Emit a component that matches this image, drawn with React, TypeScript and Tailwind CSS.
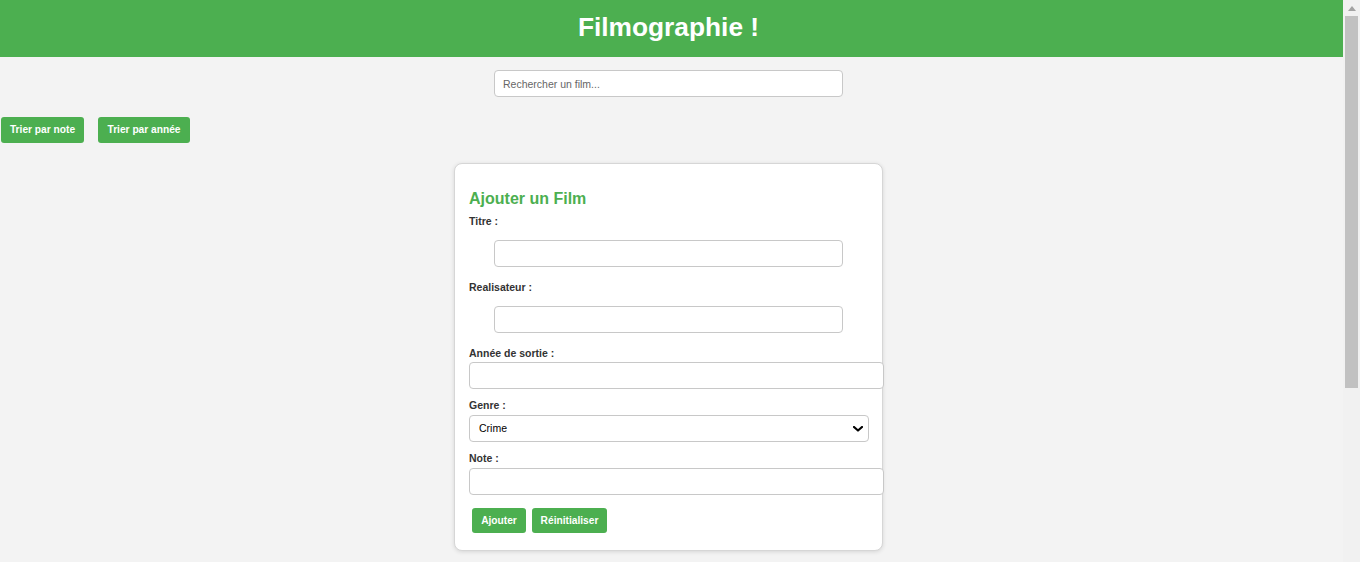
import React from 'react';

const font = { fontFamily: '"Liberation Sans", Arial, sans-serif' };

function Label({ children, className = '' }: { children: React.ReactNode; className?: string }) {
    return <label className={`block text-[10.5px] leading-[13px] font-bold text-[#333] ${className}`}>{children}</label>;
}

function Field({ className = '' }: { className?: string }) {
    return <input type="text" className={`block h-[27px] bg-white border border-[#c8c8c8] rounded-[4px] px-2 text-[10.5px] outline-none ${className}`} />;
}

function GreenButton({ children, className = '' }: { children: React.ReactNode; className?: string }) {
    return (
        <button className={`bg-[#4CAF50] text-white text-[10.2px] font-bold rounded-[3px] whitespace-nowrap ${className}`}>
            {children}
        </button>
    );
}

export default function App() {
    return (
        <div style={font} className="flex h-[562px] w-[1360px] overflow-hidden bg-[#f3f3f3]">
            <div className="w-[1343px] flex flex-col">
                {/* header */}
                <header className="h-[57px] shrink-0 bg-[#4CAF50] flex items-center justify-center pr-[6px]">
                    <h1 className="text-white text-[26.3px] font-bold leading-none pb-[2px]">Filmographie !</h1>
                </header>

                <div className="pr-[6px]">
                    <input
                        type="text"
                        placeholder="Rechercher un film..."
                        className="block mx-auto mt-[13px] w-[349px] h-[27px] bg-white border border-[#c8c8c8] rounded-[4px] px-2 text-[10.5px] placeholder:text-[#666] outline-none"
                    />
                </div>

                <div className="flex gap-[14px] mt-[20px] ml-[1px]">
                    <GreenButton className="h-[26px] w-[83px]">Trier par note</GreenButton>
                    <GreenButton className="h-[26px] w-[92px]">Trier par année</GreenButton>
                </div>

                <div className="pr-[6px]">
                    <div className="mx-auto mt-[20px] w-[429px] bg-white border border-[#d6d6d6] rounded-[8px] shadow-[0_1px_4px_rgba(0,0,0,0.12)] pt-[26px] px-[14px] pb-[17px]">
                        <h2 className="text-[#4CAF50] text-[16px] leading-[18px] font-bold">Ajouter un Film</h2>

                        <Label className="mt-[7px]">Titre :</Label>
                        <Field className="mt-[12px] w-[349px] mx-auto" />

                        <Label className="mt-[14px]">Realisateur :</Label>
                        <Field className="mt-[12px] w-[349px] mx-auto" />

                        <Label className="mt-[14px]">Année de sortie :</Label>
                        <Field className="mt-[2px] w-[415px]" />

                        <Label className="mt-[10px]">Genre :</Label>
                        <div className="relative mt-[3px] w-[400px]">
                            <select className="appearance-none block w-full h-[27px] bg-white border border-[#c8c8c8] rounded-[4px] pl-[9px] text-[10.5px] text-black outline-none">
                                <option>Crime</option>
                            </select>
                            <svg className="absolute right-[6px] top-[11px] pointer-events-none" width="10" height="6" viewBox="0 0 10 6">
                                <polyline points="1,1 5,4.5 9,1" fill="none" stroke="#000" strokeWidth="2.2" strokeLinecap="round" strokeLinejoin="round" />
                            </svg>
                        </div>

                        <Label className="mt-[10px]">Note :</Label>
                        <Field className="mt-[3px] w-[415px]" />

                        <div className="flex gap-[6px] mt-[13px] ml-[3px]">
                            <GreenButton className="h-[25px] w-[54px]">Ajouter</GreenButton>
                            <GreenButton className="h-[25px] w-[75px]">Réinitialiser</GreenButton>
                        </div>
                    </div>
                </div>
            </div>

            {/* scrollbar */}
            <div className="w-[17px] bg-[#f1f1f1] flex flex-col items-center">
                <div className="h-[16px] flex items-center justify-center">
                    <svg width="8" height="5" viewBox="0 0 8 5">
                        <polygon points="4,0 8,5 0,5" fill="#a3a3a3" />
                    </svg>
                </div>
                <div className="w-[13px] h-[372px] bg-[#c1c1c1]" />
            </div>
        </div>
    );
}
